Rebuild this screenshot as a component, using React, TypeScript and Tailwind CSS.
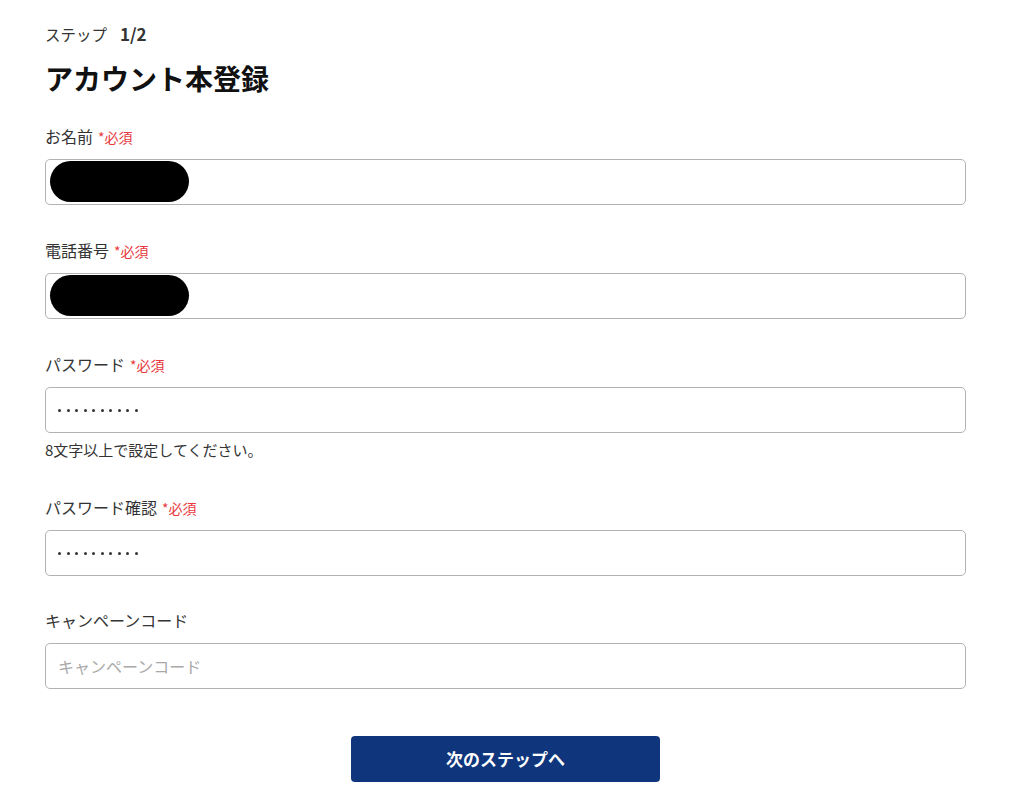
import React from "react";

const font = { fontFamily: '"Noto Sans CJK JP", "Noto Sans", sans-serif' };

function Label({ text, required }: { text: string; required?: boolean }) {
  return (
    <div className="mb-[12px] flex h-[22px] items-center text-[16px] leading-[22px] text-[#333]">
      <span>{text}</span>
      {required && <span className="ml-[5px] mt-[1px] text-[14px] leading-[22px] text-[#e8383d]">*必須</span>}
    </div>
  );
}

function Redacted() {
  return (
    <div className="relative h-[46px] w-full rounded-[5px] border border-[#b3b3b3] bg-white">
      <div className="absolute left-[4px] top-[1px] h-[41px] w-[139px] rounded-full bg-black" />
    </div>
  );
}

function Dots() {
  return (
    <div className="flex h-[46px] w-full items-center gap-[5.5px] rounded-[5px] border border-[#b3b3b3] bg-white pl-[12px]">
      {Array.from({ length: 10 }).map((_, i) => (
        <span key={i} className="h-[3px] w-[3px] rounded-full bg-[#333]" />
      ))}
    </div>
  );
}

export default function App() {
  return (
    <div className="min-h-[811px] bg-white" style={font}>
      <div className="ml-[45px] w-[921px] pt-[23px]">
        <div className="flex h-[22px] items-center text-[15.5px] leading-[22px] text-[#333]">
          <span>ステップ</span>
          <span className="ml-[13px] text-[17px] font-bold">1/2</span>
        </div>
        <h1 className="mt-[15px] h-[36px] text-[28px] font-bold leading-[36px] text-[#111]">アカウント本登録</h1>

        <div className="mt-[29px]">
          <Label text="お名前" required />
          <Redacted />
        </div>

        <div className="mt-[34px]">
          <Label text="電話番号" required />
          <Redacted />
        </div>

        <div className="mt-[34px]">
          <Label text="パスワード" required />
          <Dots />
          <p className="mt-[7px] h-[20px] text-[15px] leading-[20px] text-[#333]">8文字以上で設定してください。</p>
        </div>

        <div className="mt-[36px]">
          <Label text="パスワード確認" required />
          <Dots />
        </div>

        <div className="mt-[33px]">
          <Label text="キャンペーンコード" />
          <input
            type="text"
            placeholder="キャンペーンコード"
            className="block h-[46px] w-full rounded-[5px] border border-[#b3b3b3] bg-white pl-[12px] text-[16px] text-[#333] outline-none placeholder:text-[#a9a9a9]"
            style={font}
          />
        </div>

        <div className="mt-[47px] flex justify-center">
          <button
            className="h-[46px] w-[309px] rounded-[4px] bg-[#0f357c] text-[17px] font-bold text-white"
            style={font}
          >
            次のステップへ
          </button>
        </div>
      </div>
    </div>
  );
}
